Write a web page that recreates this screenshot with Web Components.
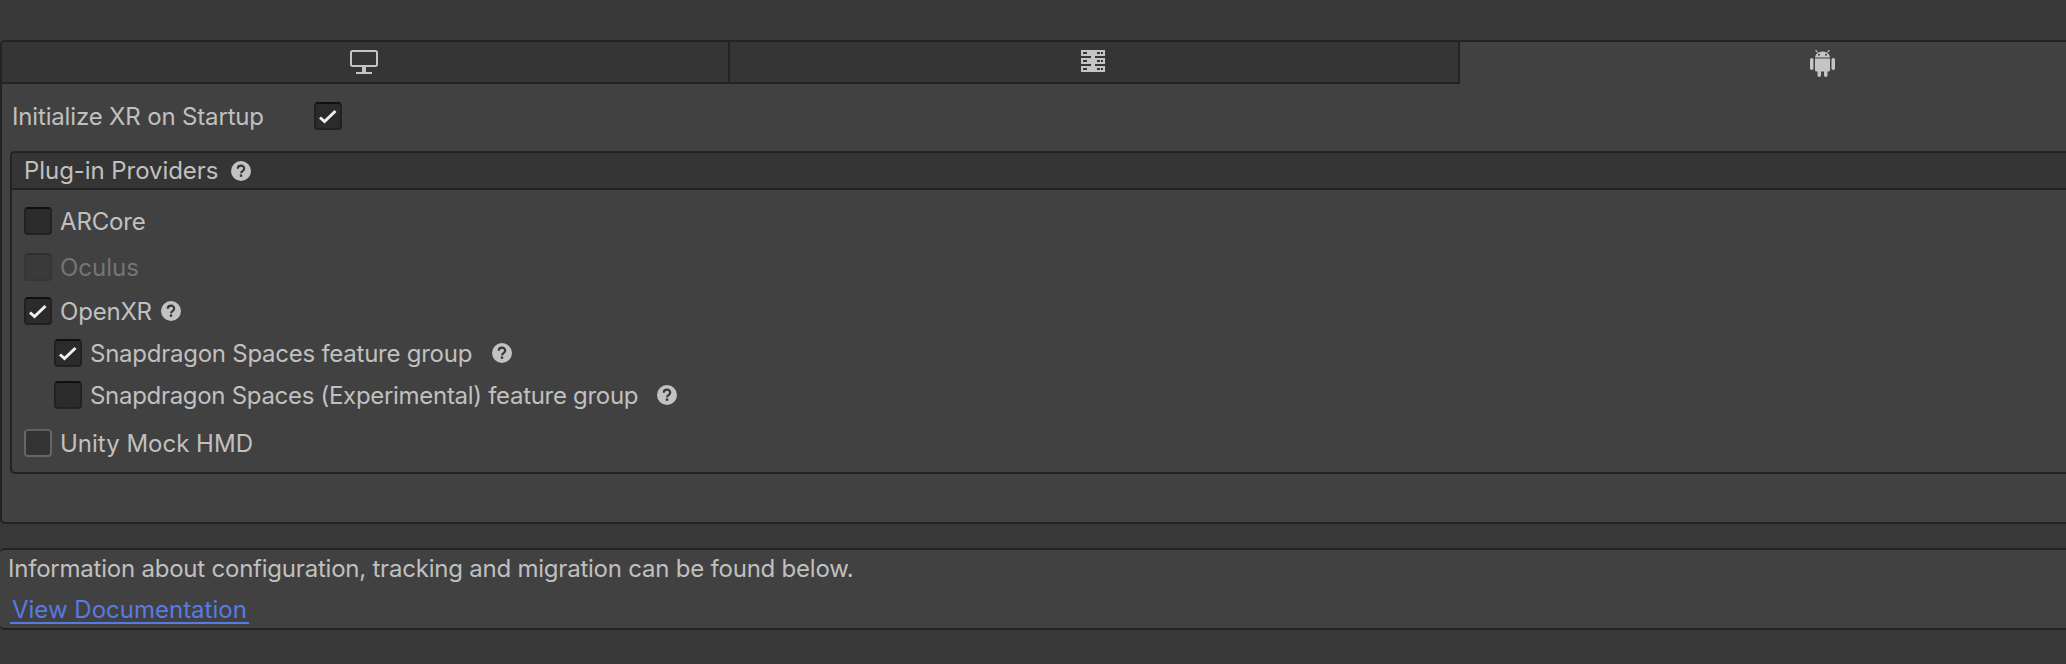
<!DOCTYPE html>
<html>
<head>
<meta charset="utf-8">
<title>XR Plug-in Management</title>
<style>
  html, body { margin: 0; background: #383838; }
  body { font-family: Inter, "Liberation Sans", sans-serif; font-size: 24px; color: #c0c0c0; overflow: hidden; }
</style>
</head>
<body>
<xr-settings>
  <xr-tabs>
    <xr-tab icon="desktop"></xr-tab>
    <xr-tab icon="server"></xr-tab>
    <xr-tab icon="android" active></xr-tab>
  </xr-tabs>
  <xr-panel>
    <xr-startup style="letter-spacing:-.16px">Initialize XR on Startup</xr-startup>
    <xr-group>
      <span slot="title" style="letter-spacing:-.06px">Plug-in Providers</span>
      <xr-check style="margin-top:17px;letter-spacing:-.15px">ARCore</xr-check>
      <xr-check disabled style="margin-top:18px">Oculus</xr-check>
      <xr-check checked help style="margin-top:16px;--help-gap:9px;letter-spacing:-.2px">OpenXR</xr-check>
      <xr-check checked help nested style="margin-top:14px;letter-spacing:-.25px">Snapdragon Spaces feature group</xr-check>
      <xr-check help nested style="margin-top:14px;--help-gap:19px;letter-spacing:-.3px">Snapdragon Spaces (Experimental) feature group</xr-check>
      <xr-check light style="margin-top:20px">Unity Mock HMD</xr-check>
    </xr-group>
  </xr-panel>
  <xr-info>
    Information about configuration, tracking and migration can be found below.
    <span slot="link">View Documentation</span>
  </xr-info>
</xr-settings>

<script>
const ICONS = {
  desktop: `<svg width="28" height="24" viewBox="0 0 28 24" fill="none">
    <rect x="1" y="1" width="26" height="15" rx="1.5" stroke="#c4c4c4" stroke-width="2"/>
    <path d="M12 17h4v5h-4zM6 22h16v2H6z" fill="#c4c4c4"/></svg>`,
  server: `<svg width="24" height="22" viewBox="0 0 24 22">
    <path d="M0 0h24v6H0zM0 8h24v6H0zM0 16h24v6H0zM10 6h4v2h-4zM10 14h4v2h-4z" fill="#c4c4c4"/>
    <path d="M2 2h4v2H2zM16 2h3v2h-3zM20 2h2v2h-2zM2 10h4v2H2zM16 10h3v2h-3zM20 10h2v2h-2zM2 18h4v2H2zM16 18h3v2h-3zM20 18h2v2h-2z" fill="#353535"/></svg>`,
  android: `<svg width="25" height="27" viewBox="0 0 25 27" fill="#c4c4c4">
    <path d="M5 7.500a7.500 6 0 0 1 15 0z"/>
    <path d="M7.500 2.500 5.500 0M17.500 2.500 19.500 0" stroke="#c4c4c4" stroke-width="1.200"/>
    <circle cx="9" cy="4.800" r="1" fill="#414141"/><circle cx="16" cy="4.800" r="1" fill="#414141"/>
    <path d="M5 8.500h15v11.500a1.500 1.500 0 0 1-1.500 1.500h-12A1.500 1.500 0 0 1 5 20z"/>
    <rect x="0" y="8" width="3.500" height="12" rx="1.700"/><rect x="21.500" y="8" width="3.500" height="12" rx="1.700"/>
    <rect x="7.500" y="20" width="3.500" height="7" rx="1.700"/><rect x="14" y="20" width="3.500" height="7" rx="1.700"/></svg>`
};

class XrSettings extends HTMLElement {
  static { customElements.define("xr-settings", this); }
  constructor() {
    super();
    this.attachShadow({ mode: "open" });
    this.shadowRoot.innerHTML = /* html */ `
      <style>
        :host { display: block; height: 664px; padding-top: 40px; box-sizing: border-box; }
      </style>
      <slot></slot>`;
  }
}

class XrTabs extends HTMLElement {
  static { customElements.define("xr-tabs", this); }
  constructor() {
    super();
    this.attachShadow({ mode: "open" });
    this.shadowRoot.innerHTML = /* html */ `
      <style>
        :host {
          display: grid;
          grid-template-columns: 728px 730px 730px;
          height: 44px;
          box-sizing: border-box;
          border-top: 2px solid #232323;
          border-left: 2px solid #232323;
          border-top-left-radius: 5px;
          overflow: hidden;
        }
      </style>
      <slot></slot>`;
  }
}

class XrTab extends HTMLElement {
  static { customElements.define("xr-tab", this); }
  constructor() {
    super();
    this.attachShadow({ mode: "open" });
    this.shadowRoot.innerHTML = /* html */ `
      <style>
        :host {
          display: flex;
          align-items: flex-start;
          justify-content: center;
          padding: 8px 2px 0 0;
          box-sizing: border-box;
          background: #353535;
          border-right: 2px solid #232323;
          border-bottom: 2px solid #232323;
        }
        :host([active]) { background: #414141; border: 0; padding-right: 5px; }
        svg { display: block; }
      </style>
      <span id="icon"></span>`;
  }
  connectedCallback() {
    this.shadowRoot.getElementById("icon").innerHTML = ICONS[this.getAttribute("icon")];
  }
}

class XrPanel extends HTMLElement {
  static { customElements.define("xr-panel", this); }
  constructor() {
    super();
    this.attachShadow({ mode: "open" });
    this.shadowRoot.innerHTML = /* html */ `
      <style>
        :host {
          display: block;
          height: 440px;
          box-sizing: border-box;
          background: #414141;
          border-left: 2px solid #232323;
          border-bottom: 2px solid #232323;
          border-bottom-left-radius: 5px;
          padding: 18px 0 0 8px;
        }
      </style>
      <slot></slot>`;
  }
}

class XrBox extends HTMLElement {
  static { customElements.define("xr-box", this); }
  constructor() {
    super();
    this.attachShadow({ mode: "open" });
    this.shadowRoot.innerHTML = /* html */ `
      <style>
        :host {
          display: block;
          flex: none;
          width: 28px;
          height: 28px;
          box-sizing: border-box;
          border-radius: 4px;
          background: #2b2b2b;
          border: 2px solid #212121;
          border-top-color: #0f0f0f;
        }
        :host([disabled]) { background: #3a3a3a; border-color: #363636; border-top-color: #303030; }
        :host([light]) { background: #333; border-color: #666; border-top-color: #606060; }
        svg { display: none; width: 24px; height: 24px; }
        :host([checked]) svg { display: block; }
      </style>
      <svg viewBox="0 0 24 24" fill="none"><path d="M4 13.500l4.500 4L19.500 7" stroke="#f0f0f0" stroke-width="3"/></svg>`;
  }
}

class XrHelp extends HTMLElement {
  static { customElements.define("xr-help", this); }
  constructor() {
    super();
    this.attachShadow({ mode: "open" });
    this.shadowRoot.innerHTML = /* html */ `
      <style>
        :host { display: block; flex: none; width: 20px; height: 20px; }
        svg { display: block; }
      </style>
      <svg width="20" height="20" viewBox="0 0 20 20">
        <circle cx="10" cy="10" r="10" fill="#c2c2c2"/>
        <path d="M6.800 7.700C6.800 5.800 8.200 4.700 10 4.700c1.900 0 3.200 1.100 3.200 2.800 0 2.500-3.200 2.500-3.200 4.700" fill="none" stroke="#383838" stroke-width="2.200"/>
        <rect x="8.800" y="13.400" width="2.400" height="2.400" fill="#383838"/>
      </svg>`;
  }
}

class XrStartup extends HTMLElement {
  static { customElements.define("xr-startup", this); }
  constructor() {
    super();
    this.attachShadow({ mode: "open" });
    this.shadowRoot.innerHTML = /* html */ `
      <style>
        :host { display: flex; align-items: center; height: 28px; padding-left: 2px; white-space: nowrap; }
        .label { width: 302px; line-height: 26px; padding-top: 2px; }
      </style>
      <span class="label"><slot></slot></span>
      <xr-box checked></xr-box>`;
  }
}

class XrGroup extends HTMLElement {
  static { customElements.define("xr-group", this); }
  constructor() {
    super();
    this.attachShadow({ mode: "open" });
    this.shadowRoot.innerHTML = /* html */ `
      <style>
        :host {
          display: block;
          margin: 21px 0 0 0;
          height: 323px;
          box-sizing: border-box;
          border: solid #232323;
          border-width: 2px 0 2px 2px;
          border-radius: 5px 0 0 5px;
          overflow: hidden;
        }
        header {
          display: flex;
          align-items: center;
          gap: 13px;
          height: 37px;
          box-sizing: border-box;
          padding-left: 12px;
          background: #353535;
          border-bottom: 2px solid #232323;
          line-height: 35px;
        }
        .body { padding-left: 12px; }
      </style>
      <header><slot name="title"></slot><xr-help></xr-help></header>
      <div class="body"><slot></slot></div>`;
  }
}

class XrCheck extends HTMLElement {
  static { customElements.define("xr-check", this); }
  constructor() {
    super();
    this.attachShadow({ mode: "open" });
    this.shadowRoot.innerHTML = /* html */ `
      <style>
        :host {
          display: flex;
          align-items: center;
          height: 28px;
          white-space: nowrap;
          gap: var(--help-gap, 20px);
        }
        :host([nested]) { padding-left: 30px; }
        :host([disabled]) { color: #757575; }
        .main { display: flex; align-items: center; gap: 8px; }
        .text { line-height: 26px; padding-top: 2px; }
      </style>
      <div class="main"><xr-box></xr-box><span class="text"><slot></slot></span></div>`;
  }
  connectedCallback() {
    const box = this.shadowRoot.querySelector("xr-box");
    for (const a of ["checked", "disabled", "light"]) {
      if (this.hasAttribute(a)) box.setAttribute(a, "");
    }
    if (this.hasAttribute("help") && !this.shadowRoot.querySelector("xr-help")) {
      this.shadowRoot.append(document.createElement("xr-help"));
    }
  }
}

class XrInfo extends HTMLElement {
  static { customElements.define("xr-info", this); }
  constructor() {
    super();
    this.attachShadow({ mode: "open" });
    this.shadowRoot.innerHTML = /* html */ `
      <style>
        :host {
          display: block;
          margin-top: 24px;
          height: 82px;
          box-sizing: border-box;
          background: #414141;
          border-top: 2px solid #232323;
          border-bottom: 2px solid #232323;
          border-radius: 5px 0 0 5px;
          padding-left: 8px;
          white-space: nowrap;
        }
        .msg { line-height: 36px; margin-top: 1px; letter-spacing: -.22px; }
        .link {
          display: inline-block;
          margin: 10px 0 0 2px;
          padding: 0 2px;
          line-height: 25px;
          color: #587ae4;
          border-bottom: 2px solid #587ae4;
        }
      </style>
      <div class="msg"><slot></slot></div>
      <span class="link"><slot name="link"></slot></span>`;
  }
}
</script>
</body>
</html>
